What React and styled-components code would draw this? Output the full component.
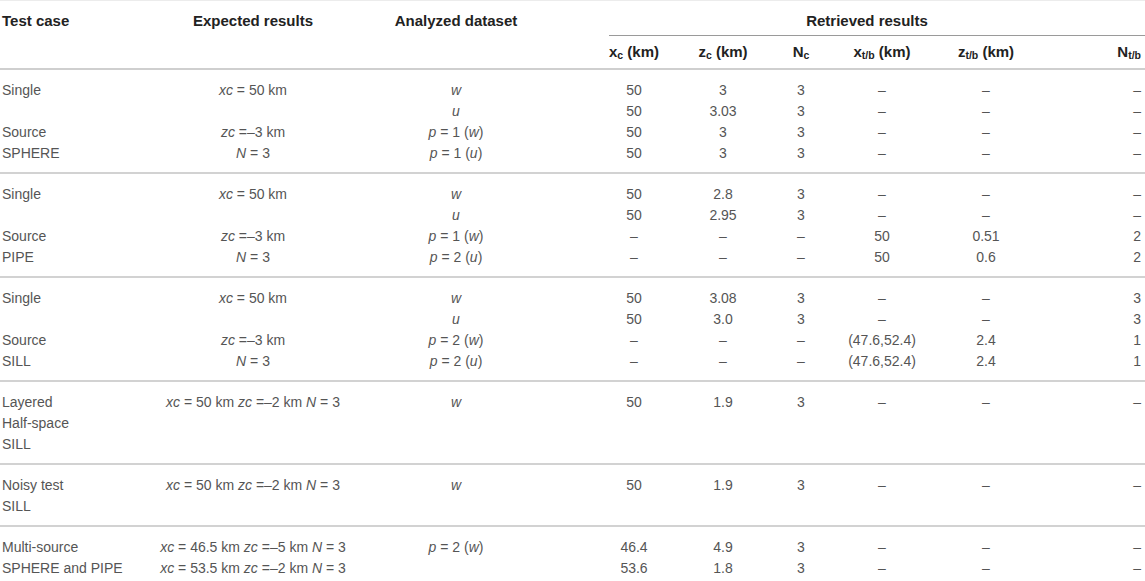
import React from "react"
import styled, {createGlobalStyle} from "styled-components"

// Results table: test cases, expected source parameters and retrieved values.

const GlobalStyle = createGlobalStyle`
    body {
        margin: 0;
        background: #fff;
        font-family: "Liberation Sans", Arial, sans-serif;
    }
`

const cols = [
    {w: 150, align: "left", pl: 2},
    {w: 206},
    {w: 200},
    {w: 124, pl: 32},
    {w: 86},
    {w: 70},
    {w: 92},
    {w: 116},
    {w: 101, align: "right", pr: 4},
]

const Table = styled.table`
    width: 1145px;
    table-layout: fixed;
    border-collapse: collapse;
    border-top: 1px solid #ececec;
`

const HeadCell = styled.th`
    padding: ${p => p.$pt || 9}px ${p => p.$pr || 0}px ${p => p.$pb || 4}px ${p => p.$pl || 0}px;
    text-align: ${p => p.$align || "center"};
    vertical-align: top;
    font-size: 15px;
    line-height: 21px;
    font-weight: 700;
    color: #222;
    white-space: nowrap;
    sub {
        font-size: 10.5px;
        vertical-align: -2px;
        line-height: 0;
    }
`

const HeadRow = styled.tr`
    border-bottom: ${p => p.$last ? "2px solid #cfcfcf" : "none"};
`

const SpanTitle = styled.div`
    padding: 0 20px 4px 0;
    margin-left: 53px;
    border-bottom: 1.5px solid #9a9a9a;
`

const GroupRow = styled.tr`
    border-bottom: 2px solid #d2d2d2;
`

const Cell = styled.td`
    padding: 10px ${p => p.$pr || 0}px 8px ${p => p.$pl || 0}px;
    text-align: ${p => p.$align || "center"};
    vertical-align: top;
    font-size: 14px;
    line-height: 21px;
    color: #555;
    white-space: nowrap;
`

const Line = styled.div`
    height: 21px;
`

const M = styled.i`
    font-style: italic;
`

const D = "–"
const xc = v => <><M>xc</M> = {v} km</>
const zc = v => <><M>zc</M> =–{v} km</>
const N3 = <><M>N</M> = 3</>
const pw = n => <><M>p</M> = {n} (<M>w</M>)</>
const pu = n => <><M>p</M> = {n} (<M>u</M>)</>
const W = <M>w</M>
const U = <M>u</M>
const full = (x, z) => <>{xc(x)} {zc(z)} {N3}</>

const groups = [
    [
        ["Single", "", "Source", "SPHERE"],
        [xc(50), "", zc(3), N3],
        [W, U, pw(1), pu(1)],
        ["50", "50", "50", "50"],
        ["3", "3.03", "3", "3"],
        ["3", "3", "3", "3"],
        [D, D, D, D],
        [D, D, D, D],
        [D, D, D, D],
    ],
    [
        ["Single", "", "Source", "PIPE"],
        [xc(50), "", zc(3), N3],
        [W, U, pw(1), pu(2)],
        ["50", "50", D, D],
        ["2.8", "2.95", D, D],
        ["3", "3", D, D],
        [D, D, "50", "50"],
        [D, D, "0.51", "0.6"],
        [D, D, "2", "2"],
    ],
    [
        ["Single", "", "Source", "SILL"],
        [xc(50), "", zc(3), N3],
        [W, U, pw(2), pu(2)],
        ["50", "50", D, D],
        ["3.08", "3.0", D, D],
        ["3", "3", D, D],
        [D, D, "(47.6,52.4)", "(47.6,52.4)"],
        [D, D, "2.4", "2.4"],
        ["3", "3", "1", "1"],
    ],
    [
        ["Layered", "Half-space", "SILL"],
        [full(50, 2)],
        [W],
        ["50"],
        ["1.9"],
        ["3"],
        [D],
        [D],
        [D],
    ],
    [
        ["Noisy test", "SILL"],
        [full(50, 2)],
        [W],
        ["50"],
        ["1.9"],
        ["3"],
        [D],
        [D],
        [D],
    ],
    [
        ["Multi-source", "SPHERE and PIPE"],
        [full(46.5, 5), full(53.5, 2)],
        [pw(2)],
        ["46.4", "53.6"],
        ["4.9", "1.8"],
        ["3", "3"],
        [D, D],
        [D, D],
        [D, D],
    ],
]

const subHeads = [
    <>x<sub>c</sub> (km)</>,
    <>z<sub>c</sub> (km)</>,
    <>N<sub>c</sub></>,
    <>x<sub>t/b</sub> (km)</>,
    <>z<sub>t/b</sub> (km)</>,
    <>N<sub>t/b</sub></>,
]

export default function App(){
    return(
        <>
            <GlobalStyle />
            <Table>
                <colgroup>
                    {cols.map((c, i) => <col key={i} style={{width: c.w}} />)}
                </colgroup>
                <thead>
                    <HeadRow>
                        <HeadCell rowSpan={2} $align="left" $pl={2}>Test case</HeadCell>
                        <HeadCell rowSpan={2}>Expected results</HeadCell>
                        <HeadCell rowSpan={2}>Analyzed dataset</HeadCell>
                        <HeadCell colSpan={6} $pb={0.001}>
                            <SpanTitle>Retrieved results</SpanTitle>
                        </HeadCell>
                    </HeadRow>
                    <HeadRow $last>
                        {subHeads.map((h, i) => {
                            const c = cols[i + 3]
                            return <HeadCell key={i} $pt={5} $pb={6} $align={c.align} $pl={c.pl} $pr={c.pr}>{h}</HeadCell>
                        })}
                    </HeadRow>
                </thead>
                <tbody>
                    {groups.map((g, gi) => (
                        <GroupRow key={gi}>
                            {g.map((lines, ci) => {
                                const c = cols[ci]
                                return (
                                    <Cell key={ci} $align={c.align} $pl={c.pl} $pr={c.pr}>
                                        {lines.map((l, li) => <Line key={li}>{l === "" ? "\u00a0" : l}</Line>)}
                                    </Cell>
                                )
                            })}
                        </GroupRow>
                    ))}
                </tbody>
            </Table>
        </>
    )
}
